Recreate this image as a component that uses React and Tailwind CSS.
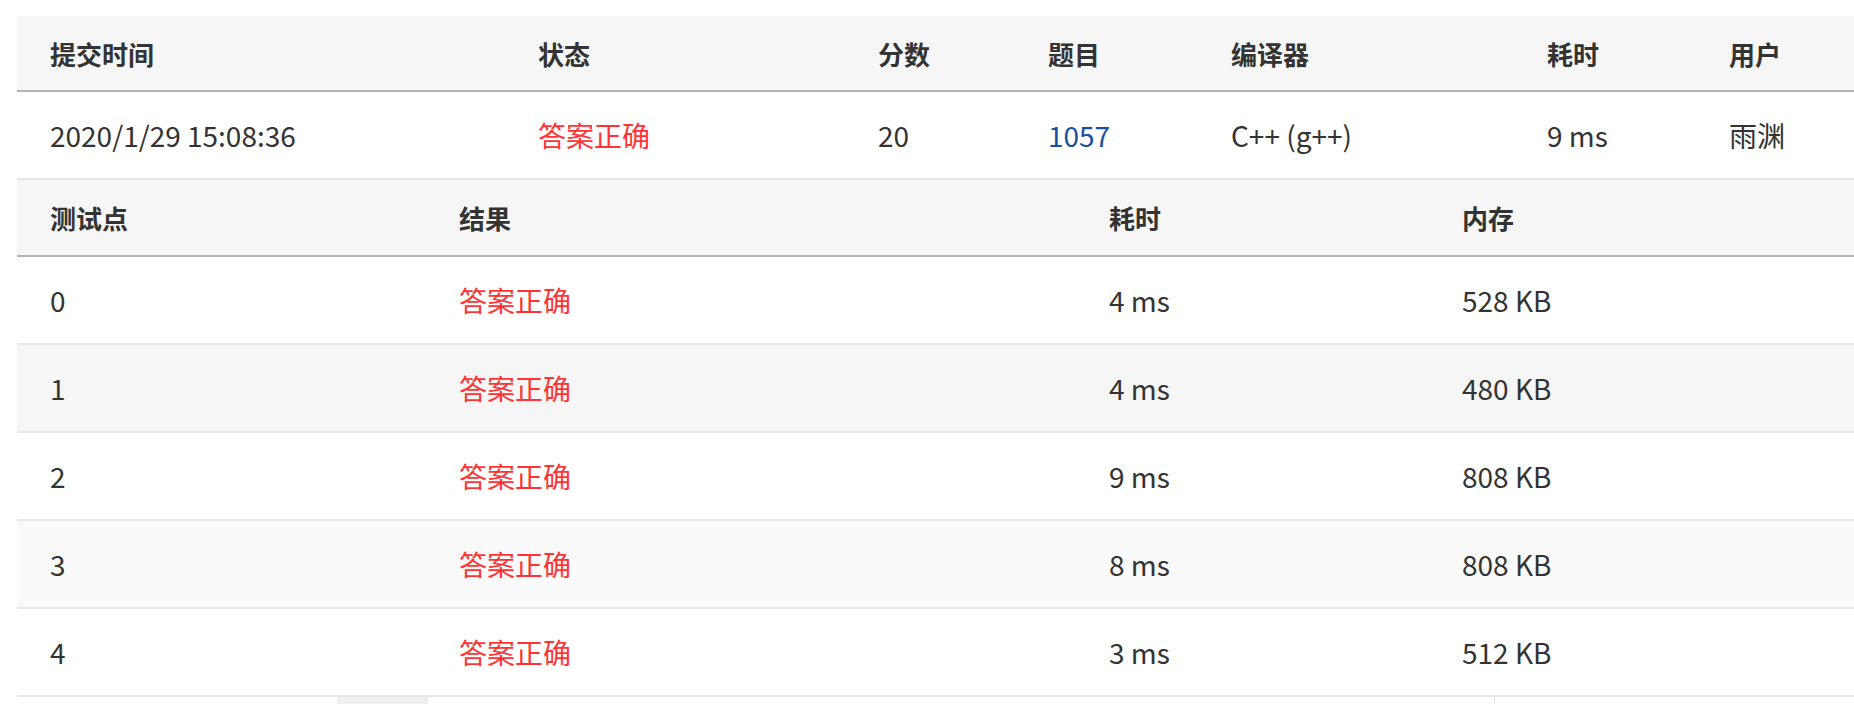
import React from 'react';

const submission = {
  time: '2020/1/29 15:08:36',
  status: '答案正确',
  score: '20',
  problem: '1057',
  compiler: 'C++ (g++)',
  cost: '9 ms',
  user: '雨渊',
};

const cases = [
  { id: 0, result: '答案正确', time: '4 ms', mem: '528 KB', bg: 'bg-white' },
  { id: 1, result: '答案正确', time: '4 ms', mem: '480 KB', bg: 'bg-[#f6f6f6]' },
  { id: 2, result: '答案正确', time: '9 ms', mem: '808 KB', bg: 'bg-white' },
  { id: 3, result: '答案正确', time: '8 ms', mem: '808 KB', bg: 'bg-[#fafafa]' },
  { id: 4, result: '答案正确', time: '3 ms', mem: '512 KB', bg: 'bg-white' },
];

const font = { fontFamily: '"Noto Sans CJK SC", "Noto Sans", sans-serif' };

function App() {
  return (
    <div className="w-[1854px] h-[704px] overflow-hidden bg-white pl-[17px] pt-[16px] text-[#333]" style={font}>
      {/* submission summary */}
      <div className="w-[1837px]">
        <div className="grid grid-cols-[488px_340px_170px_183px_316px_182px_1fr] h-[76px] items-center bg-[#f6f6f6] border-b-2 border-[#b3b3b3] text-[26px] font-bold">
          <div className="pl-[33px]">提交时间</div>
          <div className="pl-[33px]">状态</div>
          <div className="pl-[33px]">分数</div>
          <div className="pl-[33px]">题目</div>
          <div className="pl-[33px]">编译器</div>
          <div className="pl-[33px]">耗时</div>
          <div className="pl-[33px]">用户</div>
        </div>
        <div className="grid grid-cols-[488px_340px_170px_183px_316px_182px_1fr] h-[88px] items-center bg-white border-b-2 border-[#e6e6e6] text-[28px]">
          <div className="pl-[33px]">{submission.time}</div>
          <div className="pl-[33px] text-[#ff3333]">{submission.status}</div>
          <div className="pl-[33px]">{submission.score}</div>
          <div className="pl-[33px] text-[#16509e]">{submission.problem}</div>
          <div className="pl-[33px]">{submission.compiler}</div>
          <div className="pl-[33px]">{submission.cost}</div>
          <div className="pl-[33px]">{submission.user}</div>
        </div>

        {/* test cases */}
        <div className="grid grid-cols-[409px_650px_353px_1fr] h-[77px] items-center bg-[#f6f6f6] border-b-2 border-[#b3b3b3] text-[26px] font-bold">
          <div className="pl-[33px]">测试点</div>
          <div className="pl-[33px]">结果</div>
          <div className="pl-[33px]">耗时</div>
          <div className="pl-[33px]">内存</div>
        </div>
        {cases.map(c => (
          <div
            key={c.id}
            className={`grid grid-cols-[409px_650px_353px_1fr] h-[88px] items-center border-b-2 border-[#e6e6e6] text-[28px] ${c.bg}`}
          >
            <div className="pl-[33px]">{c.id}</div>
            <div className="pl-[33px] text-[#ff3333]">{c.result}</div>
            <div className="pl-[33px]">{c.time}</div>
            <div className="pl-[33px]">{c.mem}</div>
          </div>
        ))}

        {/* start of the code panel below */}
        <div className="flex h-[8px]">
          <div className="w-[320px]"></div>
          <div className="w-[91px] bg-[#efefef]"></div>
          <div className="w-[1066px]"></div>
          <div className="w-px bg-[#e0e0e0]"></div>
        </div>
      </div>
    </div>
  );
}

export default App;
